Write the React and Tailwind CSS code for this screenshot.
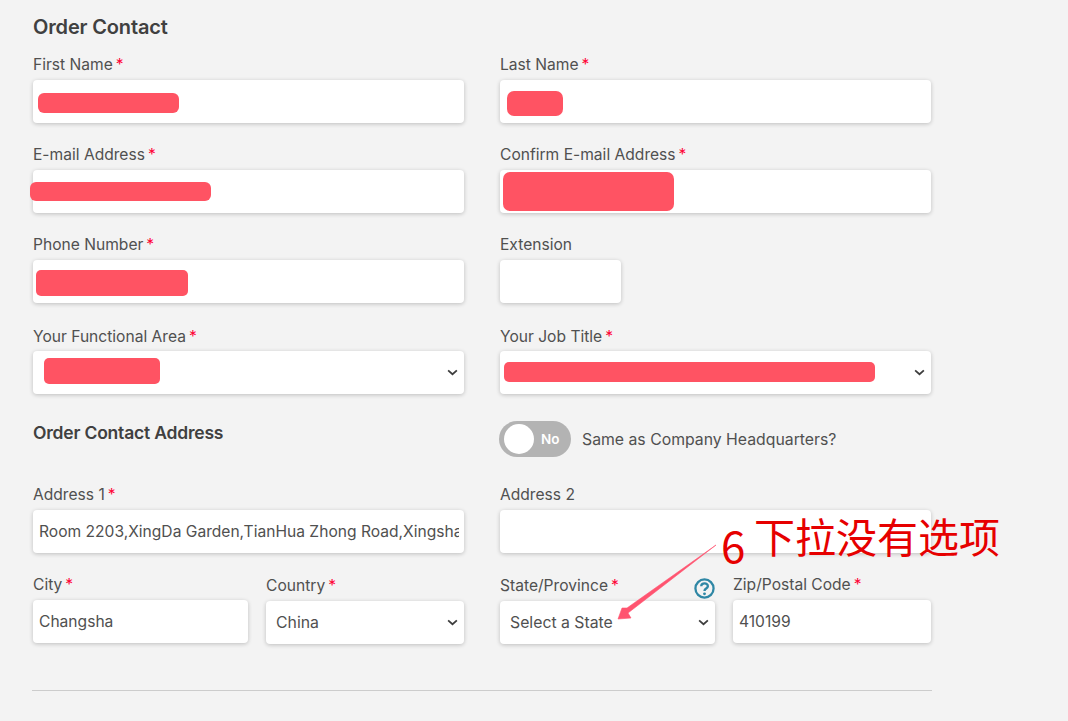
import React from "react";

const font = { fontFamily: "Inter, 'Noto Sans CJK SC', sans-serif" };

function Label({ children, required, className = "" }) {
  return (
    <div className={`h-[25px] text-[15.6px] leading-[20px] text-[#505050] whitespace-nowrap ${className}`}>
      {children}
      {required && <span className="ml-[3px] text-[#ff0033]">*</span>}
    </div>
  );
}

function Box({ children, className = "" }) {
  return (
    <div className={`relative h-[43px] rounded-[4px] bg-white shadow-[0_1px_4px_rgba(0,0,0,0.22)] ${className}`}>
      {children}
    </div>
  );
}

function TextBox({ value = "", className = "" }) {
  return (
    <Box className={className}>
      <input
        readOnly
        value={value}
        className="h-full w-full rounded-[4px] bg-transparent pl-[6px] pr-[5px] text-[15.6px] text-[#505050] outline-none"
      />
    </Box>
  );
}

function Chevron({ className = "" }) {
  return (
    <svg viewBox="0 0 12 8" className={`pointer-events-none absolute top-[18px] h-[7px] w-[11px] ${className}`} fill="none" stroke="#3d3d3d" strokeWidth="2">
      <path d="M1 1.5 L6 6 L11 1.5" />
    </svg>
  );
}

function SelectBox({ value = "", className = "" }) {
  return (
    <Box className={className}>
      <select
        value={value}
        onChange={() => {}}
        className="h-full w-full appearance-none rounded-[4px] bg-transparent pl-[10px] text-[15.8px] text-[#505050] outline-none"
      >
        <option value={value}>{value}</option>
      </select>
      <Chevron className="right-[6px]" />
    </Box>
  );
}

function Mark({ className = "" }) {
  return <div className={`absolute bg-[#ff5363] ${className}`} />;
}

export default function App() {
  return (
    <div style={font} className="relative h-[721px] w-[1068px] overflow-hidden bg-[#f3f3f3]">
      <div className="ml-[33px] w-[898px] pt-[14px]">
        <h2 className="h-[28px] text-[20px] font-semibold leading-[27px] tracking-[-0.15px] text-[#404040]">Order Contact</h2>
        <div className="mt-[13px] grid grid-cols-[431px_431px] gap-x-[36px]">
          <div className="h-[90px]">
            <Label required>First Name</Label>
            <Box>
              <Mark className="left-[5px] top-[13px] h-[20px] w-[141px] rounded-[6px]" />
            </Box>
          </div>
          <div className="h-[90px]">
            <Label required>Last Name</Label>
            <Box>
              <Mark className="left-[7px] top-[11px] h-[25px] w-[56px] rounded-[7px]" />
            </Box>
          </div>

          <div className="h-[90px]">
            <Label required>E-mail Address</Label>
            <Box>
              <Mark className="left-[-3px] top-[12px] h-[19px] w-[181px] rounded-[6px]" />
            </Box>
          </div>
          <div className="h-[90px]">
            <Label required>Confirm E-mail Address</Label>
            <Box>
              <Mark className="left-[3px] top-[2px] h-[39px] w-[171px] rounded-[7px]" />
            </Box>
          </div>

          <div className="h-[91px]">
            <Label required>Phone Number</Label>
            <Box>
              <Mark className="left-[3px] top-[10px] h-[26px] w-[152px] rounded-[5px]" />
            </Box>
          </div>
          <div className="h-[91px]">
            <Label>Extension</Label>
            <Box className="w-[121px]" />
          </div>

          <div className="h-[95px]">
            <Label required className="pt-px">Your Functional Area</Label>
            <Box>
              <Mark className="left-[11px] top-[7px] h-[26px] w-[116px] rounded-[5px]" />
              <Chevron className="right-[6px]" />
            </Box>
          </div>
          <div className="h-[95px]">
            <Label required className="pt-px">Your Job Title</Label>
            <Box>
              <Mark className="left-[4px] top-[11px] h-[20px] w-[371px] rounded-[5px]" />
              <Chevron className="right-[6px]" />
            </Box>
          </div>

          <div className="h-[64px]">
            <h3 className="text-[17.5px] font-semibold leading-[24px] tracking-[-0.2px] text-[#404040]">Order Contact Address</h3>
          </div>
          <div className="flex h-[64px] items-start gap-[11px]">
            <div className="ml-[-1px] flex h-[36px] w-[72px] shrink-0 items-center rounded-full bg-[#b3b3b3] pl-[5px]">
              <div className="h-[30px] w-[30px] rounded-full bg-white" />
              <span className="ml-[7px] text-[13.5px] font-semibold text-white">No</span>
            </div>
            <span className="pt-[9px] text-[15.8px] leading-[20px] text-[#505050]">Same as Company Headquarters?</span>
          </div>

          <div className="h-[90px]">
            <Label required>Address 1</Label>
            <TextBox value="Room 2203,XingDa Garden,TianHua Zhong Road,Xingsha Town,Changsha" />
          </div>
          <div className="h-[90px]">
            <Label>Address 2</Label>
            <TextBox />
          </div>

          <div className="grid grid-cols-[215px_198px] gap-x-[18px]">
            <div>
              <Label required>City</Label>
              <TextBox value="Changsha" />
            </div>
            <div className="pt-px">
              <Label required>Country</Label>
              <SelectBox value="China" />
            </div>
          </div>
          <div className="grid grid-cols-[215px_198px] gap-x-[18px]">
            <div className="pt-px">
              <div className="relative">
                <Label required>State/Province</Label>
                <svg viewBox="0 0 22 22" className="absolute right-0 top-[2px] h-[21px] w-[21px]" fill="none">
                  <circle cx="11" cy="11" r="9.5" stroke="#2f87a5" strokeWidth="2.4" />
                  <path d="M7.6 8.6 C7.6 4.6 14.6 4.7 14.5 8.7 C14.4 11.2 11 11 11 13.6" stroke="#2f87a5" strokeWidth="2.5" />
                  <circle cx="11" cy="16.6" r="1.5" fill="#2f87a5" />
                </svg>
              </div>
              <SelectBox value="Select a State" />
            </div>
            <div>
              <Label required>Zip/Postal Code</Label>
              <TextBox value="410199" />
            </div>
          </div>
        </div>
        <div className="ml-[-1px] mt-[46px] h-px w-[900px] bg-[#cccccc]" />
      </div>

      <svg viewBox="0 0 1068 721" className="pointer-events-none absolute left-0 top-0 h-[721px] w-[1068px]">
        <path d="M716 545 L627 608 L622 608 L618 619 L631 618 L628 613 Z" fill="#ff5470" stroke="#ff5470" strokeWidth="0.6" strokeLinejoin="round" />
      </svg>
      <div className="absolute left-[721px] top-[519px] text-[44px] font-normal leading-[50px] text-[#e60000]" style={{ fontFamily: "'Noto Sans CJK SC', sans-serif" }}>6</div>
      <div className="absolute left-[754px] top-[511px] whitespace-nowrap text-[41px] font-normal leading-[48px] text-[#e60000]" style={{ fontFamily: "'Noto Sans CJK SC', sans-serif" }}>下拉没有选项</div>
    </div>
  );
}
